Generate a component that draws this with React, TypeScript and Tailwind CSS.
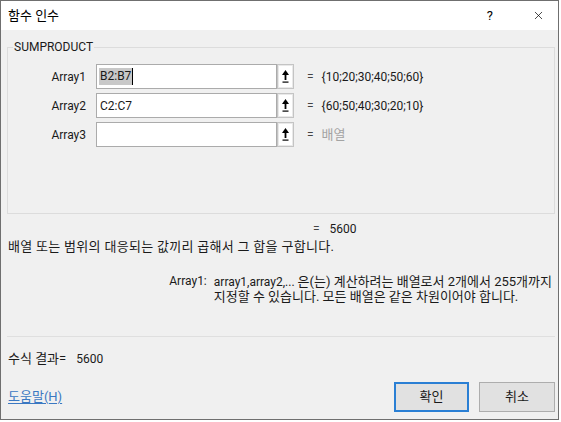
import { X } from 'lucide-react'

const FONT = { fontFamily: 'Roboto, "Noto Sans CJK KR", sans-serif' }

function RefButton() {
  return (
    <div className="w-[17px] h-[25px] border border-[#c4c4c4] bg-[#e9e9e9] p-[1px]">
      <div className="w-full h-full bg-white flex items-center justify-center">
        <svg width="7" height="14" viewBox="0 0 7 14">
          <polygon points="3.5,0 0,5 7,5" fill="#000" />
          <rect x="2.6" y="4.5" width="1.8" height="5.5" fill="#000" />
          <rect x="0.5" y="11.5" width="6" height="1.2" fill="#000" />
        </svg>
      </div>
    </div>
  )
}

function ArgRow({
  label,
  value,
  result,
  selected,
  muted,
}: {
  label: string
  value: string
  result: string
  selected?: boolean
  muted?: boolean
}) {
  return (
    <div className="flex items-center h-[25px]">
      <div className="w-[78px] text-right text-[#1a1a1a]">{label}</div>
      <div className="ml-[10px] w-[181px] h-[25px] border border-[#ababab] bg-white flex items-center pl-[2px]">
        {selected ? (
          <span className="bg-[#c8c8c8] text-[#1a1a1a] px-[1px] leading-[17px] border-r border-black">
            {value}
          </span>
        ) : (
          <span className="text-[#1a1a1a] pl-[1px]">{value}</span>
        )}
      </div>
      <RefButton />
      <span className="ml-[13px] text-[#444]">=</span>
      <span className={`ml-[8px] ${muted ? 'text-[#a3a3a3] text-[13px]' : 'text-[#1a1a1a]'}`}>{result}</span>
    </div>
  )
}

export default function App() {
  return (
    <div className="w-[561px] h-[422px] bg-white overflow-hidden text-[12px]" style={FONT}>
      <div className="w-[559px] h-[420px] border border-[#6f6f6f] bg-[#f0f0f0] flex flex-col">
        {/* Title bar */}
        <div className="h-[29px] bg-white flex items-center pl-[7px] pr-[13px]">
          <span className="text-black text-[13px]">함수 인수</span>
          <span className="ml-auto text-black text-[13px] mr-[39px]">?</span>
          <X className="w-[13px] h-[13px] text-black" strokeWidth={1.3} />
        </div>

        <div className="flex flex-col pl-[6px] pr-[3px] text-[#1a1a1a]">
          {/* Group box */}
          <div className="relative mt-[17px] h-[167px] border border-[#dcdcdc]">
            <span className="absolute -top-[9px] left-[5px] px-[1px] bg-[#f0f0f0] leading-[16px] text-[#1a1a1a]">
              SUMPRODUCT
            </span>
            <div className="flex flex-col gap-[4px] pt-[16px]">
              <ArgRow label="Array1" value="B2:B7" result="{10;20;30;40;50;60}" selected />
              <ArgRow label="Array2" value="C2:C7" result="{60;50;40;30;20;10}" />
              <ArgRow label="Array3" value="" result="배열" muted />
            </div>
          </div>

          <div className="mt-[7px] h-[16px] leading-[16px] pl-[306px]">
            <span className="text-[#444]">=</span>
            <span className="ml-[10px]">5600</span>
          </div>

          <div className="mt-[2px] h-[16px] leading-[16px] pl-[1px] text-[13px] tracking-[0.3px] whitespace-nowrap">
            배열 또는 범위의 대응되는 값끼리 곱해서 그 합을 구합니다.
          </div>

          <div className="mt-[19px] flex leading-[15px]">
            <div className="w-[202px] text-right">Array1:</div>
            <div className="ml-[7px] w-[345px]">
              <div className="h-[15px] whitespace-nowrap">
                array1,array2,... <span className="text-[13px]">은(는) 계산하려는 배열로서 2개에서 255개까지</span>
              </div>
              <div className="h-[15px] whitespace-nowrap text-[13px]">지정할 수 있습니다. 모든 배열은 같은 차원이어야 합니다.</div>
            </div>
          </div>

          <div className="mt-[32px] h-[1px] bg-[#dfdfdf]" />

          <div className="mt-[14px] h-[16px] leading-[16px] pl-[1px] flex">
            <span className="text-[13px]">수식 결과=</span>
            <span className="ml-[10px]">5600</span>
          </div>

          <div className="mt-[15px] flex items-center">
            <a className="pl-[1px] text-[13px] text-[#3a78c2] underline underline-offset-2">도움말(H)</a>
            <button className="ml-auto w-[75px] h-[30px] bg-[#e1e1e1] border-2 border-[#2a7fd4] text-[13px] text-[#1a1a1a]">
              확인
            </button>
            <button className="ml-[10px] w-[76px] h-[30px] bg-[#e1e1e1] border border-[#adadad] text-[13px] text-[#1a1a1a]">
              취소
            </button>
          </div>
        </div>
      </div>
    </div>
  )
}
